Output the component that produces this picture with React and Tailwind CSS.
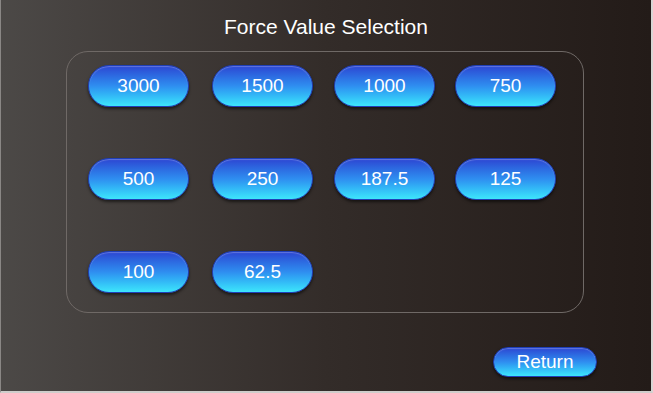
import React from 'react';

const values = ['3000', '1500', '1000', '750', '500', '250', '187.5', '125', '100', '62.5'];

const PillButton = ({ label, className }) => (
    <button
        className={`flex items-center justify-center rounded-full border border-[#1f3fb8] bg-gradient-to-b from-[#2d45d2] via-[#2f8ef0] to-[#3ee6fb] text-white shadow-[0_2px_3px_rgba(0,0,0,0.55),inset_0_1px_1px_rgba(255,255,255,0.25)] ${className}`}
    >
        {label}
    </button>
);

const App = () => {
    return (
        <div
            className="w-[653px] h-[393px] overflow-hidden flex flex-col border-l border-r-2 border-b-2 border-l-[#8a8785] border-r-[#d8d6d4] border-b-[#cfcdcb] bg-gradient-to-r from-[#4c4947] via-[#332c29] to-[#231b18]"
            style={{ fontFamily: '"Liberation Sans", Arial, sans-serif' }}
        >
            {/* Title */}
            <div className="h-[51px] pt-[15px] text-center text-[21px] leading-[24px] text-white">
                Force Value Selection
            </div>

            {/* Value panel */}
            <div className="ml-[65px] w-[518px] h-[262px] rounded-[22px] border border-[#6f6966] pt-[13px] pl-[21px]">
                <div className="grid grid-cols-[124px_122px_121px_101px] gap-y-[51px]">
                    {values.map((v) => (
                        <PillButton key={v} label={v} className="w-[101px] h-[42px] text-[19px]" />
                    ))}
                </div>
            </div>

            {/* Footer */}
            <div className="flex justify-end pt-[34px] pr-[54px]">
                <PillButton label="Return" className="w-[104px] h-[30px] text-[19px]" />
            </div>
        </div>
    );
};

export default App;
